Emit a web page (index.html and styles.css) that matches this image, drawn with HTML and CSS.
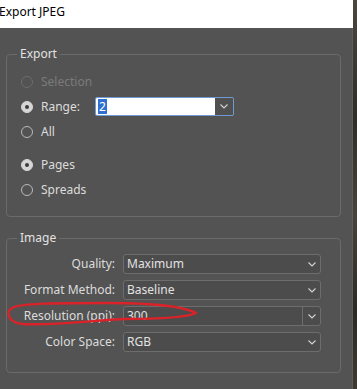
FILE: index.html
```html
<!DOCTYPE html>
<html>
<head>
<meta charset="utf-8">
<link rel="stylesheet" href="styles.css">
</head>
<body>
<div class="screen">
  <div class="window">
    <div class="titlebar">Export JPEG</div>
    <div class="dialog">
      <fieldset class="group group-export">
        <legend>Export</legend>
        <div class="radios">
          <div class="radio-row disabled"><span class="radio"></span><span>Selection</span></div>
          <div class="radio-row"><span class="radio checked"></span><span class="range-label">Range:</span>
            <div class="combo">
              <span class="combo-text"><span class="sel">2</span></span>
              <span class="combo-btn"><svg width="8" height="5" viewBox="0 0 8 5"><polyline points="0.5,0.5 4,4 7.5,0.5" fill="none" stroke="#d4d4d4" stroke-width="1.1"/></svg></span>
            </div>
          </div>
          <div class="radio-row"><span class="radio"></span><span>All</span></div>
          <div class="radio-row spaced"><span class="radio checked"></span><span>Pages</span></div>
          <div class="radio-row"><span class="radio"></span><span>Spreads</span></div>
        </div>
      </fieldset>
      <fieldset class="group group-image">
        <legend>Image</legend>
        <div class="form-grid">
          <span class="label">Quality:</span>
          <div class="select"><span class="select-text">Maximum</span><span class="select-btn"><svg width="8" height="5" viewBox="0 0 8 5"><polyline points="0.5,0.5 4,4 7.5,0.5" fill="none" stroke="#d4d4d4" stroke-width="1.1"/></svg></span></div>
          <span class="label">Format Method:</span>
          <div class="select"><span class="select-text">Baseline</span><span class="select-btn"><svg width="8" height="5" viewBox="0 0 8 5"><polyline points="0.5,0.5 4,4 7.5,0.5" fill="none" stroke="#d4d4d4" stroke-width="1.1"/></svg></span></div>
          <span class="label">Resolution (ppi):</span>
          <div class="select editable"><span class="select-text">300</span><span class="select-btn divided"><svg width="8" height="5" viewBox="0 0 8 5"><polyline points="0.5,0.5 4,4 7.5,0.5" fill="none" stroke="#d4d4d4" stroke-width="1.1"/></svg></span></div>
          <span class="label">Color Space:</span>
          <div class="select"><span class="select-text">RGB</span><span class="select-btn"><svg width="8" height="5" viewBox="0 0 8 5"><polyline points="0.5,0.5 4,4 7.5,0.5" fill="none" stroke="#d4d4d4" stroke-width="1.1"/></svg></span></div>
        </div>
      </fieldset>
    </div>
  </div>
  <div class="backdrop"></div>
  <svg class="annotation" width="357" height="389" viewBox="0 0 357 389">
    <path d="M196 313 C185 318 150 319 125 319 C95 320 55 326 22 324 C8 322 5 312 12 308 C20 303 60 303 110 303 C150 303 180 305 196 313" fill="none" stroke="#dc2229" stroke-width="2.4" stroke-linecap="round"/>
  </svg>
</div>
</body>
</html>
```
FILE: styles.css
```css
html, body {
  margin: 0;
  padding: 0;
}
body {
  width: 357px;
  height: 389px;
  overflow: hidden;
  background: #3a3833;
  font-family: "Noto Sans", "Open Sans", sans-serif;
  font-size: 12px;
  line-height: 16px;
}
.screen {
  position: relative;
  display: flex;
  width: 357px;
  height: 389px;
}
.window {
  width: 353px;
  display: flex;
  flex-direction: column;
}
.titlebar {
  height: 28px;
  box-sizing: border-box;
  padding-top: 4px;
  background: #ffffff;
  color: #000000;
  margin-left: -1px;
  padding-left: 0;
  white-space: nowrap;
}
.dialog {
  flex: 1;
  background: #535353;
  padding: 18px 12px 0 6px;
  border-right: 1px solid #5e5e5e;
}
.backdrop {
  flex: 1;
  background: linear-gradient(180deg, #4a4741 0%, #2f2d28 30%, #46433b 55%, #2c2a25 80%, #3d3a33 100%);
}
.group {
  margin: 0;
  padding: 0;
  border: 1px solid #6a6a6a;
  border-radius: 4px;
  width: 335px;
  box-sizing: border-box;
}
.group legend {
  margin-left: 10px;
  padding: 0 3px;
  color: #e2e2e2;
  font-size: 12px;
  line-height: 16px;
}
.group-image {
  margin-top: 13px;
}
.radios {
  padding: 7px 0 14px 14px;
  display: flex;
  flex-direction: column;
}
.radio-row {
  height: 25px;
  display: flex;
  align-items: center;
  color: #dcdcdc;
}
.radio-row.spaced {
  margin-top: 8px;
}
.radio-row.disabled {
  color: #7b7b7b;
}
.radio {
  width: 12px;
  height: 12px;
  box-sizing: border-box;
  border: 1px solid #b9b9b9;
  border-radius: 50%;
  margin-right: 8px;
  flex: none;
  position: relative;
}
.disabled .radio {
  border-color: #6c6c6c;
}
.radio.checked {
  background: #d6d6d6;
  border-color: #d6d6d6;
}
.radio.checked::after {
  content: "";
  position: absolute;
  left: 3px;
  top: 3px;
  width: 4px;
  height: 4px;
  border-radius: 50%;
  background: #3c3c3c;
}
.range-label {
  width: 54px;
}
.combo {
  width: 139px;
  height: 19px;
  box-sizing: border-box;
  border: 1px solid #6f9bd4;
  border-radius: 2px;
  display: flex;
  background: #ffffff;
}
.combo-text {
  flex: 1;
  display: flex;
  align-items: center;
  padding-left: 2px;
}
.sel {
  background: #2f6fd1;
  color: #ffffff;
  padding: 0 1px;
  line-height: 15px;
}
.combo-btn {
  width: 18px;
  background: #505050;
  display: flex;
  align-items: center;
  justify-content: center;
}
.form-grid {
  display: grid;
  grid-template-columns: 108px 198px;
  column-gap: 8px;
  row-gap: 6px;
  padding: 8px 0 20px 0;
}
.label {
  text-align: right;
  color: #dcdcdc;
  height: 20px;
  line-height: 20px;
  white-space: nowrap;
}
.select {
  height: 20px;
  box-sizing: border-box;
  border: 1px solid #6d6d6d;
  border-radius: 3px;
  background: #4c4c4c;
  display: flex;
  color: #e2e2e2;
}
.select-text {
  flex: 1;
  padding-left: 3px;
  line-height: 18px;
}
.select-btn {
  width: 17px;
  display: flex;
  align-items: center;
  justify-content: center;
}
.select-btn.divided {
  border-left: 1px solid #6d6d6d;
}
.annotation {
  position: absolute;
  left: 0;
  top: 0;
  pointer-events: none;
}
```
